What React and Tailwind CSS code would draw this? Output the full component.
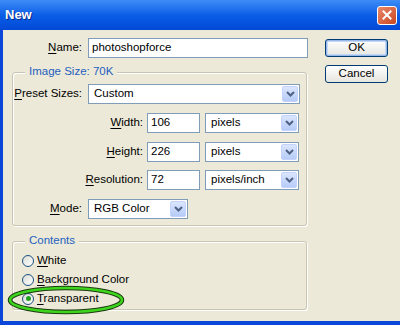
import React from "react";

const font = { fontFamily: "'Liberation Sans', Arial, sans-serif" };

function Chevron() {
  return (
    <div className="w-[16px] h-full flex items-center justify-center bg-gradient-to-b from-[#dbe6fd] to-[#b6cbf7] border border-[#c3d3fd] rounded-[2px]">
      <svg width="9" height="6" viewBox="0 0 9 6">
        <path d="M1 1 L4.5 4.5 L8 1" fill="none" stroke="#4d6185" strokeWidth="2" />
      </svg>
    </div>
  );
}

function Select({ value, className }) {
  return (
    <div className={"h-[20px] bg-white border border-[#7f9db9] flex items-center p-[1px] " + className}>
      <span className="flex-1 pl-[4px] text-[11.5px] text-black leading-none whitespace-nowrap">{value}</span>
      <Chevron />
    </div>
  );
}

function Input({ value, className }) {
  return (
    <div className={"h-[20px] bg-white border border-[#7f9db9] flex items-center pl-[3px] text-[11.5px] text-black leading-none " + className}>
      {value}
    </div>
  );
}

function Label({ first, rest, className }) {
  return (
    <span className={"text-[11.5px] text-black text-right leading-none whitespace-nowrap " + (className || "")}>
      <span className="underline underline-offset-2">{first}</span>
      {rest}
    </span>
  );
}

function Radio({ checked, first, rest }) {
  return (
    <div className="flex items-center h-[19px] gap-[3px]">
      <div className="w-[12px] h-[12px] rounded-full border border-[#1c5180] bg-gradient-to-br from-[#dcdcd5] to-white flex items-center justify-center">
        {checked && <div className="w-[5px] h-[5px] rounded-full bg-[#21a121]" />}
      </div>
      <Label first={first} rest={rest} />
    </div>
  );
}

function XpButton({ children, primary }) {
  return (
    <div
      className={
        "w-[63px] h-[18px] rounded-[3px] border border-[#003c74] bg-gradient-to-b from-white to-[#e6e5de] flex items-center justify-center text-[11.5px] text-black leading-none " +
        (primary ? "shadow-[inset_0_0_0_1px_#98b8ea,inset_0_0_0_2px_#c3d8f7]" : "")
      }
    >
      {children}
    </div>
  );
}

export default function App() {
  return (
    <div className="w-[400px] h-[325px] flex flex-col overflow-hidden bg-[#ece9d8]" style={font}>
      {/* title bar */}
      <div className="h-[30px] flex items-center justify-between pl-[5px] pr-[3px] bg-gradient-to-b from-[#3d8cf7] via-[#0b5ee6] to-[#0348d6]">
        <span className="text-white font-bold text-[13px] [text-shadow:1px_1px_0_#0a2a8a]">New</span>
        <div className="w-[20px] h-[19px] rounded-[3px] border border-white bg-gradient-to-br from-[#e9886a] to-[#c9451c] flex items-center justify-center">
          <svg width="10" height="10" viewBox="0 0 10 10">
            <path d="M1.5 1.5 L8.5 8.5 M8.5 1.5 L1.5 8.5" stroke="white" strokeWidth="2" strokeLinecap="square" />
          </svg>
        </div>
      </div>

      <div className="flex-1 flex">
        <div className="w-[3px] bg-[#0a46d8]" />
        <div className="flex-1 flex relative">
          {/* left column */}
          <div className="w-[305px] pt-[8px] flex flex-col">
            <div className="flex items-center h-[20px]">
              <Label first="N" rest="ame:" className="w-[79px]" />
              <Input value="photoshopforce" className="ml-[6px] w-[220px]" />
            </div>

            {/* Image Size group */}
            <div className="relative ml-[9px] mt-[14px] w-[295px] h-[154px] border border-[#c8c5b5] rounded-[3px] shadow-[1px_1px_0_white,inset_1px_1px_0_white] pt-[11px]">
              <span className="absolute left-[12px] -top-[7px] px-[4px] bg-[#ece9d8] text-[11.5px] leading-none text-[#1f5fbf]">
                Image Size: 70K
              </span>
              <div className="flex items-center h-[20px]">
                <Label first="P" rest="reset Sizes:" className="w-[69px]" />
                <Select value="Custom" className="ml-[6px] w-[212px]" />
              </div>
              <div className="flex flex-col gap-[8.5px] mt-[9px]">
                {[
                  ["W", "idth:", "106", "pixels"],
                  ["H", "eight:", "226", "pixels"],
                  ["R", "esolution:", "72", "pixels/inch"],
                ].map(([f, r, v, u]) => (
                  <div key={f} className="flex items-center h-[20px]">
                    <Label first={f} rest={r} className="w-[130px]" />
                    <Input value={v} className="ml-[4px] w-[53px]" />
                    <Select value={u} className="ml-[5px] w-[94px]" />
                  </div>
                ))}
                <div className="flex items-center h-[20px]">
                  <Label first="M" rest="ode:" className="w-[69px]" />
                  <Select value="RGB Color" className="ml-[6px] w-[100px]" />
                </div>
              </div>
            </div>

            {/* Contents group */}
            <div className="relative ml-[9px] mt-[15px] w-[295px] h-[69px] border border-[#c8c5b5] rounded-[3px] shadow-[1px_1px_0_white,inset_1px_1px_0_white] pt-[9px] pl-[9px]">
              <span className="absolute left-[12px] -top-[7px] px-[4px] bg-[#ece9d8] text-[11.5px] leading-none text-[#1f5fbf]">
                Contents
              </span>
              <Radio first="W" rest="hite" />
              <Radio first="B" rest="ackground Color" />
              <Radio checked first="T" rest="ransparent" />
              <svg className="absolute left-[-6px] top-[43px]" width="120" height="32" viewBox="0 0 120 32">
                <ellipse cx="59" cy="15" rx="56" ry="12" fill="none" stroke="#1c3a10" strokeWidth="4.5" />
                <ellipse cx="59" cy="15" rx="56" ry="12" fill="none" stroke="#3cd41c" strokeWidth="2.5" />
              </svg>
            </div>
          </div>

          {/* buttons */}
          <div className="ml-[17px] pt-[9px] flex flex-col gap-[8px]">
            <XpButton primary>OK</XpButton>
            <XpButton>Cancel</XpButton>
          </div>
        </div>
      </div>
      <div className="h-[4px] bg-[#0a46d8]" />
    </div>
  );
}
